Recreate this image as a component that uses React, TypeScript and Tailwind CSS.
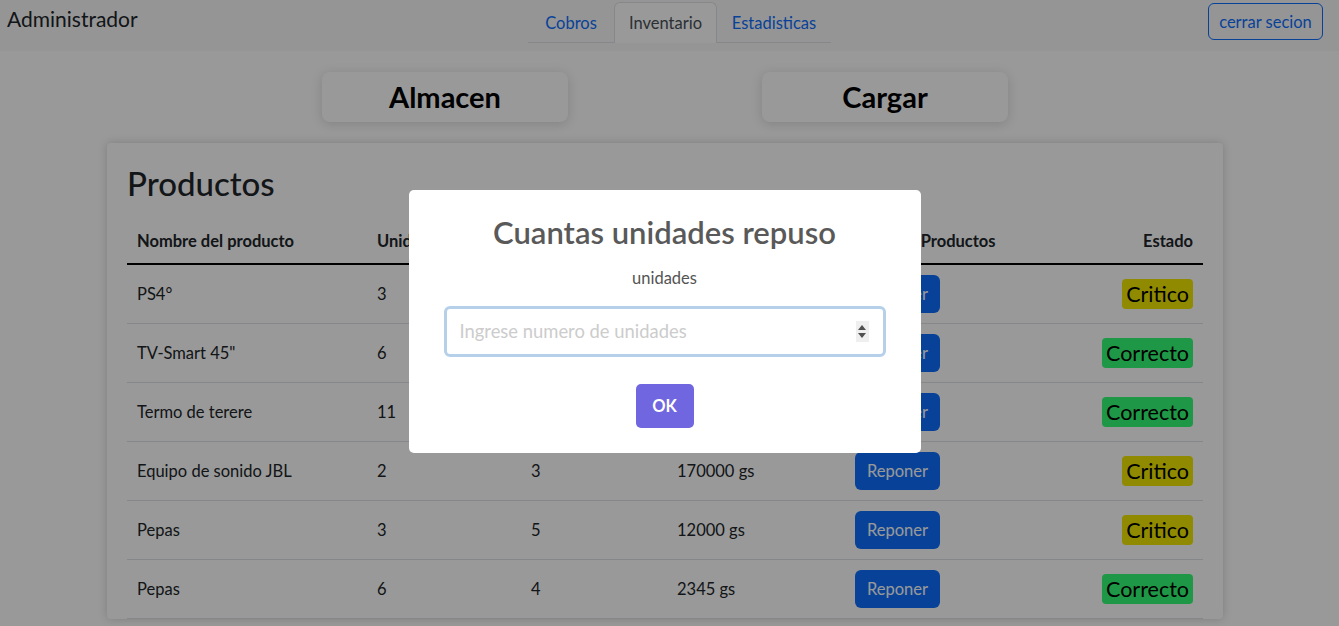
import React from "react";

const rows = [
  { name: "PS4°", units: "3", min: "5", price: "250000 gs", state: "Critico" },
  { name: 'TV-Smart 45"', units: "6", min: "4", price: "320000 gs", state: "Correcto" },
  { name: "Termo de terere", units: "11", min: "5", price: "50000 gs", state: "Correcto" },
  { name: "Equipo de sonido JBL", units: "2", min: "3", price: "170000 gs", state: "Critico" },
  { name: "Pepas", units: "3", min: "5", price: "12000 gs", state: "Critico" },
  { name: "Pepas", units: "6", min: "4", price: "2345 gs", state: "Correcto" },
];

export default function App() {
  return (
    <div className="relative min-h-screen w-full overflow-hidden bg-white font-['Lato','Noto_Sans',sans-serif] text-[#212529]">
      {/* navbar */}
      <nav className="flex h-[51px] items-start bg-[#f8f9fa] pl-[7px]">
        <div className="w-[521px] pt-[6px] text-[21px] leading-[26px]">Administrador</div>
        <div className="mt-[2px] flex border-b border-[#dee2e6] text-[16.5px]">
          <div className="flex h-[40px] w-[86px] items-center justify-center pt-[2px] text-[#0d6efd]">Cobros</div>
          <div className="-mb-px flex h-[41px] w-[103px] items-center justify-center rounded-t-[6px] border border-b-0 border-[#dee2e6] bg-white pt-[1px] text-[#495057]">
            Inventario
          </div>
          <div className="flex h-[40px] w-[114px] items-center justify-center pt-[2px] text-[#0d6efd]">Estadisticas</div>
        </div>
        <div className="ml-auto mr-[16px] mt-[3px] flex h-[37px] w-[115px] items-center justify-center rounded-[6px] border border-[#0d6efd] pt-[2px] text-[16.5px] text-[#0d6efd]">
          cerrar secion
        </div>
      </nav>

      {/* top cards */}
      <div className="mt-[21px] flex gap-[194px] pl-[322px]">
        <div className="flex h-[50px] w-[246px] items-center justify-center rounded-[8px] bg-white text-[29px] font-bold text-black shadow-[0_2px_12px_rgba(0,0,0,0.15)]">
          Almacen
        </div>
        <div className="flex h-[50px] w-[246px] items-center justify-center rounded-[8px] bg-white text-[29px] font-bold text-black shadow-[0_2px_12px_rgba(0,0,0,0.15)]">
          Cargar
        </div>
      </div>

      {/* products card */}
      <div className="ml-[107px] mt-[21px] w-[1116px] rounded-[4px] bg-white px-[20px] pt-[21px] shadow-[0_0_10px_rgba(0,0,0,0.18)]">
        <h2 className="text-[33px] font-medium leading-[38px]">Productos</h2>
        <table className="mt-[18px] w-[1076px] table-fixed border-collapse text-[16.5px]">
          <colgroup>
            <col className="w-[242px]" />
            <col className="w-[154px]" />
            <col className="w-[146px]" />
            <col className="w-[178px]" />
            <col className="w-[153px]" />
            <col className="w-[203px]" />
          </colgroup>
          <thead>
            <tr className="h-[44px] border-b-2 border-black font-bold">
              <th className="px-[10px] text-left font-bold">Nombre del producto</th>
              <th className="px-[8px] text-left font-bold">Unidades</th>
              <th className="px-[8px] text-left font-bold">Minimo</th>
              <th className="px-[8px] text-left font-bold">Precio</th>
              <th className="px-[8px] text-left font-bold whitespace-nowrap">Reponer Productos</th>
              <th className="px-[10px] text-right font-bold">Estado</th>
            </tr>
          </thead>
          <tbody>
            {rows.map((r, i) => (
              <tr key={i} className="h-[59px] border-b border-[#dee2e6]">
                <td className="px-[10px] pt-[2px]">{r.name}</td>
                <td className="px-[8px] pt-[2px]">{r.units}</td>
                <td className="px-[8px] pt-[2px]">{r.min}</td>
                <td className="px-[8px] pt-[2px]">{r.price}</td>
                <td className="px-[8px]">
                  <div className="flex h-[38px] w-[85px] items-center justify-center rounded-[6px] bg-[#0d6efd] pt-[1px] text-white">
                    Reponer
                  </div>
                </td>
                <td className="px-[10px] text-right">
                  <span
                    className={
                      r.state === "Critico"
                        ? "inline-block h-[30px] rounded-[4px] bg-[#eee600] px-[4px] text-[21.5px] leading-[30px] text-black"
                        : "inline-block h-[30px] rounded-[4px] bg-[#32fd75] px-[4px] text-[21.5px] leading-[30px] text-black"
                    }
                  >
                    {r.state}
                  </span>
                </td>
              </tr>
            ))}
          </tbody>
        </table>
      </div>

      {/* overlay + modal */}
      <div className="fixed inset-0 z-10 flex justify-center bg-black/40 pr-[10px]">
        <div className="mt-[190px] flex h-[263px] w-[512px] flex-col items-center rounded-[5px] bg-white">
          <div className="pt-[24px] text-[31px] font-semibold leading-[36px] text-[#595959]">
            Cuantas unidades repuso
          </div>
          <div className="mt-[16px] text-[16.5px] leading-[24px] text-[#545454]">unidades</div>
          <div className="mt-[16px] flex h-[51px] w-[442px] items-center rounded-[6px] border-[3px] border-[#b6d0ea] pl-[13px] pr-[14px]">
            <span className="flex-1 pt-[1px] text-[18.4px] text-[#cccccc]">Ingrese numero de unidades</span>
            <div className="flex h-[21px] w-[13px] flex-col items-center justify-center gap-[3px] bg-[#efefef]">
              <svg width="8" height="5" viewBox="0 0 8 5">
                <path d="M0 5 L4 0 L8 5 Z" fill="#505050" />
              </svg>
              <svg width="8" height="5" viewBox="0 0 8 5">
                <path d="M0 0 L8 0 L4 5 Z" fill="#505050" />
              </svg>
            </div>
          </div>
          <div className="mt-[27px] flex h-[44px] w-[58px] items-center justify-center rounded-[5px] bg-[#7066e0] text-[16.5px] font-bold text-white">
            OK
          </div>
        </div>
      </div>
    </div>
  );
}
